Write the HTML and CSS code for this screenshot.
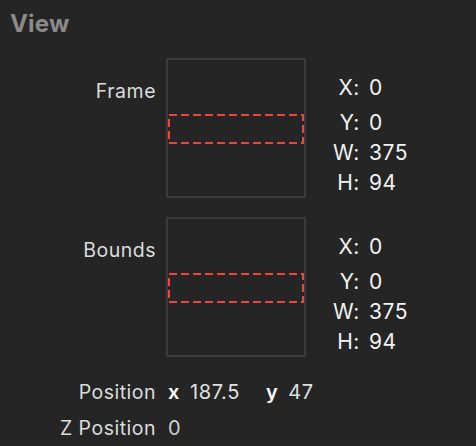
FILE: index.html
```html
<!DOCTYPE html>
<html>
<head>
<meta charset="utf-8">
<link rel="stylesheet" href="styles.css">
</head>
<body>
<div class="panel">
  <div class="title">View</div>

  <div class="section">
    <div class="label">Frame</div>
    <div class="box">
      <svg class="dash" width="136" height="30" viewBox="0 0 136 30"><rect x="1" y="1" width="134" height="28" fill="none" stroke="#f0443a" stroke-width="2" stroke-dasharray="8 4"/></svg>
    </div>
    <div class="values">
      <span class="k">X:</span><span class="v">0</span>
      <span class="k">Y:</span><span class="v">0</span>
      <span class="k">W:</span><span class="v">375</span>
      <span class="k">H:</span><span class="v">94</span>
    </div>
  </div>

  <div class="section">
    <div class="label">Bounds</div>
    <div class="box">
      <svg class="dash" width="136" height="30" viewBox="0 0 136 30"><rect x="1" y="1" width="134" height="28" fill="none" stroke="#f0443a" stroke-width="2" stroke-dasharray="8 4"/></svg>
    </div>
    <div class="values">
      <span class="k">X:</span><span class="v">0</span>
      <span class="k">Y:</span><span class="v">0</span>
      <span class="k">W:</span><span class="v">375</span>
      <span class="k">H:</span><span class="v">94</span>
    </div>
  </div>

  <div class="row pos">
    <div class="label">Position</div>
    <div class="pair"><span class="axis">x</span><span class="v">187.5</span></div>
    <div class="pair"><span class="axis">y</span><span class="v">47</span></div>
  </div>
  <div class="row zpos">
    <div class="label">Z Position</div>
    <div class="pair"><span class="v dim">0</span></div>
  </div>
</div>
</body>
</html>
```

FILE: styles.css
```css
html, body {
  margin: 0;
  padding: 0;
  background: #252525;
}
body {
  width: 476px;
  height: 446px;
  overflow: hidden;
  font-family: Inter, "Noto Sans", sans-serif;
  color: #e6e6e6;
}
.panel {
  padding: 9px 0 0 0;
}
.title {
  padding-left: 10px;
  font-size: 24px;
  font-weight: 700;
  color: #8a8a8a;
  line-height: 30px;
  letter-spacing: 0.2px;
}
.section {
  display: grid;
  grid-template-columns: 156px 140px auto;
  column-gap: 10px;
  margin-top: 19px;
  align-items: start;
}
.section + .section {
  margin-top: 19px;
}
.label {
  text-align: right;
  font-size: 19.5px;
  line-height: 24px;
  letter-spacing: 0.5px;
  color: #dcdcdc;
}
.section .label {
  margin-top: 21px;
}
.box {
  width: 136px;
  height: 136px;
  border: 2px solid #3b3b3b;
}
.dash {
  display: block;
  margin-top: 54px;
}
.values {
  display: grid;
  grid-template-columns: 44px auto;
  column-gap: 9px;
  font-size: 21px;
  line-height: 30px;
  letter-spacing: 0.6px;
  color: #f2f2f2;
  margin-top: 15px;
}
.values .k {
  text-align: right;
}
.values .k:first-child,
.values .k:first-child + .v {
  margin-bottom: 5px;
}
.row {
  display: flex;
  align-items: center;
  height: 36px;
}
.row .label {
  width: 156px;
  flex: none;
}
.pos {
  margin-top: 17px;
}
.pair {
  display: flex;
  gap: 10px;
  margin-left: 12px;
  font-size: 20px;
  letter-spacing: 0.6px;
  color: #e0e0e0;
}
.pair + .pair {
  margin-left: 26px;
}
.axis {
  color: #ffffff;
  font-weight: 600;
}
.dim {
  color: #cfcfcf;
}
```
